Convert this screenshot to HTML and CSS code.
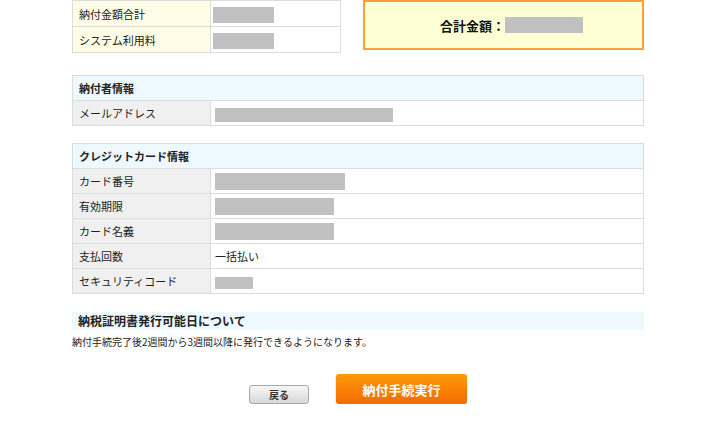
FILE: index.html
```html
<!DOCTYPE html>
<html lang="ja">
<head>
    <meta charset="UTF-8">
    <meta name="viewport" content="width=device-width, initial-scale=1.0">
    <title>納付内容確認</title>
    <link rel="stylesheet" href="styles.css">
</head>
<body>
    <div class="container">
        <div class="summary">
            <table class="amount-table">
                <tr>
                    <th>納付金額合計</th>
                    <td><span class="mask mask-amount"></span></td>
                </tr>
                <tr>
                    <th>システム利用料</th>
                    <td><span class="mask mask-amount"></span></td>
                </tr>
            </table>
            <div class="total-box">
                <span class="total-label">合計金額：</span>
                <span class="mask mask-total"></span>
            </div>
        </div>

        <table class="info-table">
            <tr>
                <th class="section-head" colspan="2">納付者情報</th>
            </tr>
            <tr>
                <th>メールアドレス</th>
                <td><span class="mask mask-mail"></span></td>
            </tr>
        </table>

        <table class="info-table">
            <tr>
                <th class="section-head" colspan="2">クレジットカード情報</th>
            </tr>
            <tr>
                <th>カード番号</th>
                <td><span class="mask mask-card"></span></td>
            </tr>
            <tr>
                <th>有効期限</th>
                <td><span class="mask mask-expire"></span></td>
            </tr>
            <tr>
                <th>カード名義</th>
                <td><span class="mask mask-expire"></span></td>
            </tr>
            <tr>
                <th>支払回数</th>
                <td>一括払い</td>
            </tr>
            <tr>
                <th>セキュリティコード</th>
                <td><span class="mask mask-code"></span></td>
            </tr>
        </table>

        <div class="notice">
            <h2 class="notice-title">納税証明書発行可能日について</h2>
            <p class="notice-text">納付手続完了後2週間から3週間以降に発行できるようになります。</p>
        </div>

        <div class="buttons">
            <button class="back-btn" type="button">戻る</button>
            <button class="submit-btn" type="button">納付手続実行</button>
        </div>
    </div>
</body>
</html>
```

FILE: styles.css
```css
* {
    margin: 0;
    padding: 0;
    box-sizing: border-box;
}

body {
    font-family: "Noto Sans CJK JP", "Noto Sans", sans-serif;
    font-size: 11px;
    color: #222;
    background-color: #ffffff;
}

.container {
    width: 572px;
    margin-left: 72px;
}

/* 金額 */
.summary {
    display: flex;
    justify-content: space-between;
    align-items: flex-start;
}

table {
    border-collapse: collapse;
}

.amount-table {
    width: 269px;
    border: 1px solid #cfcfcf;
}

.amount-table th,
.amount-table td {
    height: 26px;
    border: 1px solid #dcdcdc;
    text-align: left;
    font-weight: normal;
    vertical-align: middle;
}

.amount-table th {
    width: 138px;
    padding-left: 6px;
    background-color: #fffde6;
}

.amount-table td {
    padding-left: 2px;
    background-color: #ffffff;
}

.total-box {
    width: 281px;
    height: 50px;
    border: 2px solid #f7a13a;
    background-color: #ffffd6;
    display: flex;
    align-items: center;
    justify-content: center;
    padding-left: 16px;
}

.total-label {
    font-size: 13px;
    font-weight: bold;
    color: #111;
}

.mask {
    display: inline-block;
    background-color: #c0c0c0;
    vertical-align: middle;
}

.mask-amount {
    width: 61px;
    height: 16px;
}

.mask-total {
    width: 78px;
    height: 16px;
}

.mask-mail {
    width: 178px;
    height: 14px;
}

.mask-card {
    width: 130px;
    height: 17px;
}

.mask-expire {
    width: 119px;
    height: 17px;
}

.mask-code {
    width: 38px;
    height: 12px;
}

/* 情報テーブル */
.info-table {
    width: 100%;
    margin-top: 22px;
    border: 1px solid #dcdcdc;
}

.info-table + .info-table {
    margin-top: 17px;
}

.info-table th,
.info-table td {
    height: 25px;
    border: 1px solid #dcdcdc;
    text-align: left;
    font-weight: normal;
    vertical-align: middle;
}

.info-table th {
    width: 138px;
    padding-left: 6px;
    background-color: #f0f0f0;
}

.info-table td {
    padding-left: 4px;
}

.info-table .section-head {
    width: auto;
    font-weight: bold;
    background-color: #edf8ff;
}

/* 注意 */
.notice {
    margin-top: 18px;
}

.notice-title {
    height: 18px;
    padding-left: 6px;
    font-size: 12px;
    line-height: 18px;
    font-weight: bold;
    background-color: #eef8ff;
}

.notice-text {
    margin-top: 5px;
    font-size: 10px;
    line-height: 14px;
}

/* ボタン */
.buttons {
    display: flex;
    align-items: flex-end;
    margin-top: 25px;
    padding-left: 177px;
    gap: 27px;
}

.back-btn {
    width: 60px;
    height: 19px;
    font-family: inherit;
    font-size: 10px;
    font-weight: bold;
    color: #333;
    border: 1px solid #a8a8a8;
    border-radius: 3px;
    background: linear-gradient(#f6f6f6, #d8d8d8);
    cursor: pointer;
}

.submit-btn {
    width: 131px;
    height: 30px;
    font-family: inherit;
    font-size: 13px;
    font-weight: bold;
    color: #ffffff;
    border: none;
    border-radius: 3px;
    background: linear-gradient(#ff9a0a, #f26a00);
    box-shadow: 0 1px 2px rgba(0, 0, 0, 0.2);
    cursor: pointer;
}
```
